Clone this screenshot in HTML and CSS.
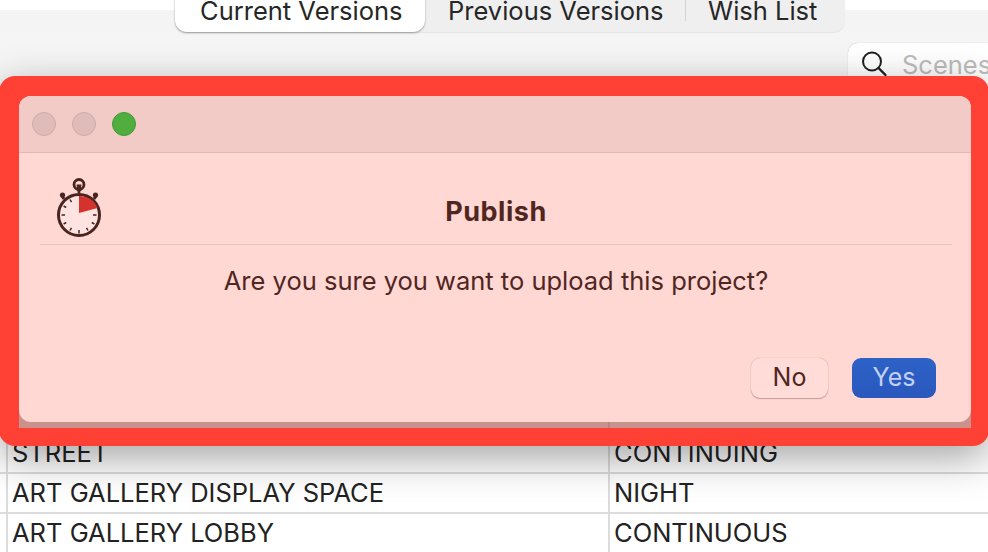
FILE: index.html
```html
<!DOCTYPE html>
<html lang="en">
<head>
<meta charset="utf-8">
<title>Publish</title>
<link rel="stylesheet" href="styles.css">
</head>
<body>
<div class="page">
  <div class="toolbar">
    <div class="segments">
      <div class="segment active">Current Versions</div>
      <div class="segment">Previous Versions</div>
      <div class="divider"></div>
      <div class="segment wish">Wish List</div>
    </div>
  </div>
  <div class="content">
    <div class="search-row">
      <div class="search">
        <svg class="search-icon" width="28" height="28" viewBox="0 0 28 28"><circle cx="12" cy="11.500" r="9" fill="none" stroke="#1f1f1f" stroke-width="2"/><path d="M18.500 18l7 7" stroke="#1f1f1f" stroke-width="2.400" stroke-linecap="round"/></svg>
        <span class="search-text">Scenes</span>
      </div>
    </div>
    <div class="table">
      <div class="row"><div class="cell first">STREET</div><div class="cell second">CONTINUING</div></div>
      <div class="row"><div class="cell first">ART GALLERY DISPLAY SPACE</div><div class="cell second">NIGHT</div></div>
      <div class="row"><div class="cell first">ART GALLERY LOBBY</div><div class="cell second">CONTINUOUS</div></div>
    </div>
  </div>
</div>
<div class="frame">
  <div class="dialog">
    <div class="panel">
      <div class="titlebar">
        <span class="light"></span><span class="light"></span><span class="light green"></span>
      </div>
      <div class="dialog-body">
        <div class="heading">
          <svg class="watch" width="50" height="62" viewBox="0 0 50 62">
            <circle cx="25" cy="6.500" r="5" fill="none" stroke="#4a2420" stroke-width="2.800"/>
            <path d="M22.500 6.500h5L26.300 15h-2.600Z" fill="#4a2420"/>
            <path d="M10 21l-2-3M40 21l2-3" stroke="#4a2420" stroke-width="3"/>
            <circle cx="8.500" cy="17" r="2.600" fill="#4a2420"/>
            <circle cx="41.500" cy="17" r="2.600" fill="#4a2420"/>
            <circle cx="25" cy="37" r="20.500" fill="#ffe3e0" stroke="#4a2420" stroke-width="3"/>
            <path d="M25 35V18A19 19 0 0 1 43.600 30Z" fill="#d6322d"/>
            <path d="M25 52v3.500M7.500 37H11M39 37h3.500M16 21.500l1.500 2.600M9.600 28l2.600 1.500M9.600 46l2.600-1.500M40.400 46l-2.600-1.500M16 52.500l1.500-2.600M34 52.500l-1.500-2.600" stroke="#4a2420" stroke-width="1.500"/>
          </svg>
          <div class="title">Publish</div>
        </div>
        <div class="message">Are you sure you want to upload this project?</div>
        <div class="actions">
          <div class="btn no">No</div>
          <div class="btn yes">Yes</div>
        </div>
      </div>
    </div>
  </div>
</div>
</body>
</html>
```

FILE: styles.css
```css
* { box-sizing: border-box; }
html, body { margin: 0; padding: 0; height: 100%; overflow: hidden; }
body { background: #fff; font-family: Inter, "Liberation Sans", sans-serif; color: #222; }
.page { width: 988px; height: 552px; display: flex; flex-direction: column; overflow: hidden; }
.toolbar { height: 33px; margin-top: -1px; padding-left: 175px; display: flex; position: relative; background: linear-gradient(#fff 11px, #f4f4f4 11px); }
.segments { width: 670px; height: 33px; display: flex; align-items: center; background: #efefef; border-radius: 0 0 12px 12px; box-shadow: 0 1px 1px #e4e4e4; }
.segment { font-size: 25.500px; line-height: 24px; height: 33px; color: #262626; white-space: nowrap; }
.segment.active { width: 250px; padding-left: 25px; background: #fff; border-radius: 0 0 12px 12px; box-shadow: 0 1px 2px #999; }
.segment:nth-child(2) { margin-left: 23px; width: 237px; }
.divider { width: 1px; height: 22px; background: #d4d4d4; margin-bottom: 11px; }
.wish { margin-left: 22px; }
.content { flex: 1; background: #f5f5f5; display: flex; flex-direction: column; }
.search-row { height: 402px; padding: 11px 0 0 848px; }
.search { width: 160px; height: 60px; background: #fff; border-radius: 10px; box-shadow: 0 0 1px #aaa; display: flex; align-items: flex-start; padding: 7px 0 0 12px; gap: 14px; }
.search-text { font-size: 25.500px; line-height: 30px; color: #bcbcbc; }
.table { flex: 1; background: #fff; }
.row { height: 40px; display: flex; border-bottom: 2px solid #dcdcdc; font-size: 25.500px; line-height: 38px; color: #222; }
.cell { white-space: nowrap; }
.first { width: 602px; margin-left: 6px; padding-left: 4px; border-left: 2px solid #dcdcdc; }
.second { padding-left: 4px; border-left: 2px solid #dcdcdc; }
.frame { position: absolute; left: -1px; top: 76px; width: 990px; height: 370px; background: #fe4134; border-radius: 16px; padding: 20px 18px 18px 20px; box-shadow: 0 12px 40px rgba(0,0,0,.36); }
.dialog { height: 332px; background: linear-gradient(90deg, #c9928c 589px, #b98680 589px, #b98680 591px, #c9928c 591px); border-radius: 12px 12px 0 0; }
.panel { height: 326px; background: #ffd7d3; border-radius: 12px; overflow: hidden; display: flex; flex-direction: column; }
.titlebar { height: 57px; flex: none; background: #f2cbc7; border-bottom: 1px solid #e2b8b4; display: flex; align-items: center; gap: 16px; padding: 0 0 1px 13px; }
.light { width: 24px; height: 24px; border-radius: 50%; background: #dfbcb9; border: 1px solid #d0aaa8; }
.green { background: #50ae3e; border-color: #43993a; }
.dialog-body { flex: 1; padding: 0 19px 0 21px; display: flex; flex-direction: column; }
.heading { height: 92px; position: relative; border-bottom: 1px solid #ecc2be; display: flex; justify-content: center; align-items: flex-end; padding-bottom: 16px; }
.watch { position: absolute; left: 14px; top: 25px; }
.title { font-size: 27px; font-weight: 700; letter-spacing: .5px; line-height: 32px; color: #51261f; }
.message { font-size: 25.500px; line-height: 30px; text-align: center; color: #51261f; margin-top: 21px; }
.actions { display: flex; justify-content: flex-end; gap: 24px; margin-top: 62px; padding-right: 16px; }
.btn { height: 40px; font-size: 25px; line-height: 38px; text-align: center; border-radius: 9px; }
.no { width: 77px; color: #51261f; background: #ffdcd8; box-shadow: 0 0 1px #b88, 0 1px 1px #c89c98; }
.yes { width: 84px; color: #c3d0f2; background: linear-gradient(#2d62c6, #2a58bd); }
```
